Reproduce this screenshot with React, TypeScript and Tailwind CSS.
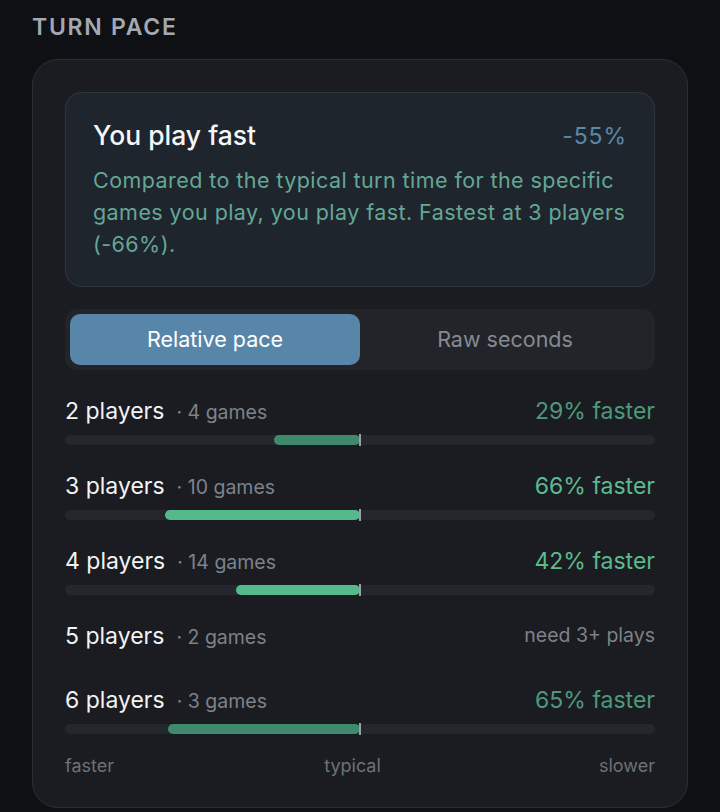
import React from 'react';

type Row = {
  players: number;
  games: number;
  pct: number | null;
  strong: boolean;
};

const rows: Row[] = [
  { players: 2, games: 4, pct: 29, strong: false },
  { players: 3, games: 10, pct: 66, strong: true },
  { players: 4, games: 14, pct: 42, strong: true },
  { players: 5, games: 2, pct: null, strong: false },
  { players: 6, games: 3, pct: 65, strong: false },
];

const PaceBar = ({ pct, strong }: { pct: number; strong: boolean }) => {
  return (
    <div className="relative mt-[10px] h-[10px] w-full rounded-full bg-[#24272c]">
      <div
        className={`absolute top-0 h-full rounded-full ${strong ? 'bg-[#56b98c]' : 'bg-[#3f8a6d]'}`}
        style={{ right: '50%', width: `${pct / 2}%` }}
      />
      <div className="absolute left-1/2 top-[-1px] h-[12px] w-[2px] -translate-x-1/2 bg-[#9aa0a8]" />
    </div>
  );
};

const PlayerRow = ({ row }: { row: Row }) => {
  return (
    <div>
      <div className="flex h-[28px] items-center justify-between">
        <p className="flex items-baseline">
          <span className="text-[23px] text-[#f1f3f5]">{row.players} players</span>
          <span className="ml-[12px] text-[19.5px] text-[#7d828b]">· {row.games} games</span>
        </p>
        {row.pct === null ? (
          <span className="text-[19.5px] text-[#7d828b]">need 3+ plays</span>
        ) : (
          <span className={`text-[23px] ${row.strong ? 'text-[#5cba8f]' : 'text-[#4c9a7b]'}`}>
            {row.pct}% faster
          </span>
        )}
      </div>
      {row.pct === null ? <div className="h-[9px]" /> : <PaceBar pct={row.pct} strong={row.strong} />}
    </div>
  );
};

export default function App() {
  return (
    <div
      className="min-h-[812px] w-[720px] bg-[#0f1013] px-[32px] pt-[13px]"
      style={{ fontFamily: 'Inter, "Noto Sans", sans-serif' }}
    >
      <h2 className="text-[23px] font-semibold leading-[28px] tracking-[0.075em] text-[#a3a8b2]">TURN PACE</h2>

      <div className="mt-[18px] w-[656px] rounded-[26px] border border-[#2b2e34] bg-[#1a1c21] px-[32px] pb-[30px] pt-[32px]">
        <div className="rounded-[16px] border border-[#2f353d] bg-[#1f252c] px-[27px] pb-[26px] pt-[27px]">
          <div className="flex h-[32px] items-center justify-between">
            <h3 className="text-[26.5px] font-medium text-[#f4f6f8]">You play fast</h3>
            <span className="text-[23px] tracking-[0.04em] text-[#5b87a8]">-55%</span>
          </div>
          <p className="mt-[12px] text-[21.5px] leading-[32px] tracking-[0.02em] text-[#64a796]">
            Compared to the typical turn time for the specific games you play, you play fast. Fastest at 3
            players (-66%).
          </p>
        </div>

        <div className="mt-[22px] flex rounded-[12px] bg-[#222429] p-[5px]">
          <button className="h-[51px] flex-1 rounded-[10px] bg-[#5886a9] text-[21.5px] text-white">
            Relative pace
          </button>
          <button className="h-[51px] flex-1 rounded-[10px] text-[21.5px] text-[#858a93]">Raw seconds</button>
        </div>

        <div className="mt-[27px] flex flex-col gap-[27px]">
          {rows.map((r) => (
            <PlayerRow key={r.players} row={r} />
          ))}
        </div>

        <div className="mt-[19px] flex h-[24px] items-center justify-between text-[18px] text-[#6c717a]">
          <span>faster</span>
          <span className="pr-[8px]">typical</span>
          <span>slower</span>
        </div>
      </div>
    </div>
  );
}
